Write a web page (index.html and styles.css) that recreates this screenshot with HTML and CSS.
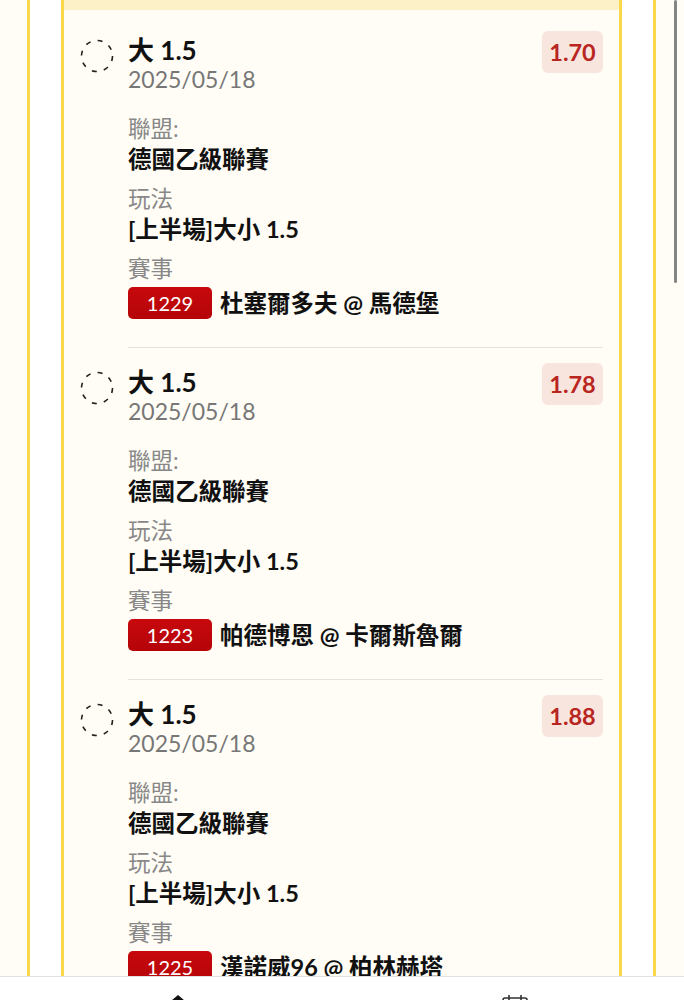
FILE: index.html
```html
<!DOCTYPE html>
<html lang="zh-Hant">
<head>
<meta charset="UTF-8">
<meta name="viewport" content="width=device-width, initial-scale=1.0">
<title>投注記錄</title>
<link rel="stylesheet" href="styles.css">
</head>
<body>
  <div class="panel">
    <div class="card">
      <div class="card-band"></div>
      <div class="bet-list">

        <div class="bet">
          <svg class="check" width="34" height="34" viewBox="0 0 34 34"><circle cx="17" cy="17" r="15.5" fill="none" stroke="#222" stroke-width="1.6" stroke-dasharray="5 7.2"/></svg>
          <div class="bet-main">
            <div class="bet-head">
              <div class="bet-title">
                <div class="pick">大 1.5</div>
                <div class="date">2025/05/18</div>
              </div>
              <div class="odds">1.70</div>
            </div>
            <div class="fields">
              <div class="field">
                <div class="label">聯盟:</div>
                <div class="value">德國乙級聯賽</div>
              </div>
              <div class="field">
                <div class="label">玩法</div>
                <div class="value">[上半場]大小 1.5</div>
              </div>
              <div class="field">
                <div class="label">賽事</div>
                <div class="match"><span class="match-no">1229</span><span class="value">杜塞爾多夫 @ 馬德堡</span></div>
              </div>
            </div>
          </div>
        </div>

        <div class="bet">
          <svg class="check" width="34" height="34" viewBox="0 0 34 34"><circle cx="17" cy="17" r="15.5" fill="none" stroke="#222" stroke-width="1.6" stroke-dasharray="5 7.2"/></svg>
          <div class="bet-main">
            <div class="bet-head">
              <div class="bet-title">
                <div class="pick">大 1.5</div>
                <div class="date">2025/05/18</div>
              </div>
              <div class="odds">1.78</div>
            </div>
            <div class="fields">
              <div class="field">
                <div class="label">聯盟:</div>
                <div class="value">德國乙級聯賽</div>
              </div>
              <div class="field">
                <div class="label">玩法</div>
                <div class="value">[上半場]大小 1.5</div>
              </div>
              <div class="field">
                <div class="label">賽事</div>
                <div class="match"><span class="match-no">1223</span><span class="value">帕德博恩 @ 卡爾斯魯爾</span></div>
              </div>
            </div>
          </div>
        </div>

        <div class="bet">
          <svg class="check" width="34" height="34" viewBox="0 0 34 34"><circle cx="17" cy="17" r="15.5" fill="none" stroke="#222" stroke-width="1.6" stroke-dasharray="5 7.2"/></svg>
          <div class="bet-main">
            <div class="bet-head">
              <div class="bet-title">
                <div class="pick">大 1.5</div>
                <div class="date">2025/05/18</div>
              </div>
              <div class="odds">1.88</div>
            </div>
            <div class="fields">
              <div class="field">
                <div class="label">聯盟:</div>
                <div class="value">德國乙級聯賽</div>
              </div>
              <div class="field">
                <div class="label">玩法</div>
                <div class="value">[上半場]大小 1.5</div>
              </div>
              <div class="field">
                <div class="label">賽事</div>
                <div class="match"><span class="match-no">1225</span><span class="value">漢諾威96 @ 柏林赫塔</span></div>
              </div>
            </div>
          </div>
        </div>

      </div>
    </div>
  </div>

  <!-- bottom tab bar -->
  <nav class="tabbar">
    <div class="tab">
      <svg width="30" height="30" viewBox="0 0 30 30"><path d="M15 2 L2 13 H6 V27 H24 V13 H28 Z" fill="#111"/></svg>
    </div>
    <div class="tab">
      <svg width="30" height="30" viewBox="0 0 30 30" fill="none" stroke="#333" stroke-width="1.6"><rect x="3" y="5" width="24" height="22" rx="2"/><path d="M9 2 V8 M21 2 V8 M3 11 H27"/></svg>
    </div>
  </nav>

  <div class="scrollbar"></div>
</body>
</html>
```

FILE: styles.css
```css
body {
  margin: 0;
  background-color: #fffdf6;
  font-family: Lato, "Noto Sans CJK TC", sans-serif;
  color: #111;
}

.panel {
  width: 561px;
  margin-left: 27px;
  padding: 0 31px;
  background-color: #fff;
  border-left: 3px solid #f9d84c;
  border-right: 3px solid #f9d84c;
}

.card {
  background-color: #fffdf5;
  border-left: 3px solid #f9d84c;
  border-right: 3px solid #f9d84c;
}

.card-band {
  height: 10px;
  background-color: #fdf2c7;
}

.bet-list {
  padding: 6px 16px 0;
}

.bet {
  display: flex;
  gap: 14px;
}

.check {
  flex: none;
  margin-top: 23px;
}

.bet-main {
  flex: 1;
  padding: 15px 0 28px;
  border-bottom: 1px solid #e4e2dc;
}

.bet-head {
  display: flex;
  justify-content: space-between;
  align-items: flex-start;
}

.bet-title {
  margin-top: 4px;
}

.pick {
  font-size: 26px;
  font-weight: 700;
  line-height: 30px;
}

.date {
  font-size: 23px;
  line-height: 29px;
  color: #777;
}

.odds {
  width: 61px;
  height: 42px;
  line-height: 42px;
  text-align: center;
  border-radius: 6px;
  background-color: #f8e5de;
  color: #b8261f;
  font-size: 23.5px;
  font-weight: 700;
}

.fields {
  margin-top: 20px;
}

.field {
  margin-bottom: 10px;
}

.field:last-child {
  margin-bottom: 0;
}

.label {
  font-size: 22.5px;
  line-height: 30px;
  color: #888;
}

.value {
  font-size: 23.5px;
  font-weight: 700;
  line-height: 30px;
}

.match {
  display: flex;
  align-items: center;
  gap: 8px;
  margin-top: 3px;
  height: 32px;
}

.match-no {
  width: 84px;
  height: 32px;
  line-height: 32px;
  text-align: center;
  border-radius: 5px;
  background: linear-gradient(#c7090d, #b50408);
  color: #fff;
  font-size: 20px;
}

.tabbar {
  position: fixed;
  left: 0;
  right: 0;
  bottom: 0;
  height: 7px;
  background-color: #fff;
  border-top: 1px solid #e2e2e2;
  display: flex;
  justify-content: space-between;
  padding: 16px 154px 0 163px;
  overflow: hidden;
}

.tab {
  width: 30px;
}

.scrollbar {
  position: fixed;
  top: 0;
  right: 7px;
  width: 3px;
  height: 283px;
  border-radius: 2px;
  background-color: #858585;
}
```
